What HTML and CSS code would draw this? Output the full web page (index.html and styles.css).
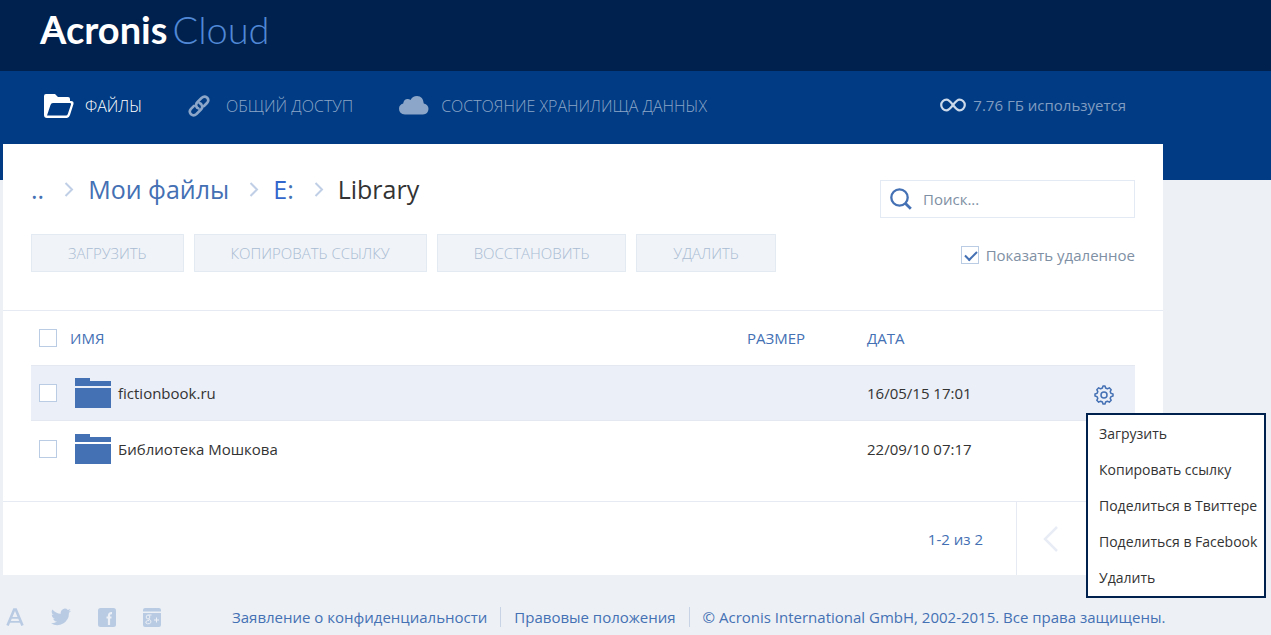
FILE: index.html
```html
<!DOCTYPE html>
<html lang="ru">
<head>
<meta charset="utf-8">
<title>Acronis Cloud</title>
<meta name="viewport" content="width=device-width, initial-scale=1">
<link rel="stylesheet" href="styles.css">
</head>
<body>
<header class="brand-bar">
  <a class="logo" href="#"><span class="logo-name">Acronis</span><span class="logo-product">Cloud</span></a>
</header>
<div class="nav-bar">
  <nav class="nav">
    <a class="nav-link nav-files active" href="#">
      <svg width="30" height="24" viewBox="0 0 30 24" aria-hidden="true"><path fill="currentColor" fill-rule="evenodd" d="M2 0h9l3 3h10q2 0 2 2v2h1q3 0 2.500 3l-3.500 11q-1 3-3 3H3q-3 0-3-3V2q0-2 2-2ZM9 9Q7 9 6.500 11L3 21.500H22q1.300 0 1.800-1.500L27 10.500Q27.500 9 26 9Z"/></svg>
      ФАЙЛЫ</a>
    <a class="nav-link nav-share" href="#">
      <svg width="22" height="22" viewBox="0 0 22 22" fill="none" stroke="currentColor" stroke-width="2.600" stroke-linecap="round" aria-hidden="true"><path d="M9 12.500q-2-3 .5-5.500l4-4q2.800-2.600 5.500-.5 2.600 2.800 0 5.500l-3 3M13 9q2.500 3 0 5.500l-4.500 4.500q-2.800 2.500-5.500.3-2.500-2.800 0-5.500l3-3"/><path d="m9 12.500 1.500 1M11.500 8l1.500 1"/></svg>
      ОБЩИЙ ДОСТУП</a>
    <a class="nav-link nav-storage" href="#">
      <svg width="30" height="19" viewBox="0 0 30 19" aria-hidden="true"><path fill="currentColor" d="M6 18.500Q0 18 0 12.800 0 8.800 4.200 7.600 4.500 3.800 8 3q2-.3 3.500.9Q13.500 0 18 0q6.300.4 6.800 7.500Q29.500 8.500 29.500 13q-.3 5-5.500 5.500Z"/></svg>
      СОСТОЯНИЕ ХРАНИЛИЩА ДАННЫХ</a>
  </nav>
  <div class="usage">
    <svg width="26" height="14" viewBox="0 0 26 14" fill="none" stroke="#ccd9ea" stroke-width="2.200" aria-hidden="true"><path d="M13 7Q9 1.700 6.500 1.700a5.200 5.200 0 0 0 0 10.600Q9 12.300 13 7T19.500 1.700a5.200 5.200 0 0 1 0 10.600Q17 12.300 13 7Z"/></svg>
    <span>7.76 ГБ используется</span>
  </div>
</div>
<main class="card">
  <div class="top-row">
    <nav class="crumbs" aria-label="Путь">
      <a class="crumb crumb-up" href="#">..</a>
      <svg class="chevron" width="10" height="15" viewBox="0 0 10 15" aria-hidden="true"><path d="m1.500 1 6.500 6.500L1.500 14"/></svg>
      <a class="crumb" href="#">Мои файлы</a>
      <svg class="chevron" width="10" height="15" viewBox="0 0 10 15" aria-hidden="true"><path d="m1.500 1 6.500 6.500L1.500 14"/></svg>
      <a class="crumb crumb-drive" href="#"><span>E</span>:</a>
      <svg class="chevron" width="10" height="15" viewBox="0 0 10 15" aria-hidden="true"><path d="m1.500 1 6.500 6.500L1.500 14"/></svg>
      <span class="crumb-current">Library</span>
    </nav>
    <label class="search">
      <svg width="22" height="22" viewBox="0 0 22 22" fill="none" stroke="#4470b4" aria-label="Поиск"><circle cx="9.500" cy="9.500" r="8.200" stroke-width="2.300"/><path d="m15.500 15.500 5.300 5.300" stroke-width="2.800"/></svg>
      <input class="search-input" type="text" placeholder="Поиск...">
    </label>
  </div>
  <div class="tool-row">
    <div class="buttons">
      <button class="btn" type="button" disabled>ЗАГРУЗИТЬ</button>
      <button class="btn" type="button" disabled>КОПИРОВАТЬ ССЫЛКУ</button>
      <button class="btn" type="button" disabled>ВОССТАНОВИТЬ</button>
      <button class="btn" type="button" disabled>УДАЛИТЬ</button>
    </div>
    <label class="show-deleted"><input class="check" type="checkbox" checked>Показать удаленное</label>
  </div>
  <div class="list">
    <table class="files">
      <thead>
        <tr>
          <th class="col-check"><input class="check" type="checkbox" aria-label="Выбрать все"></th>
          <th>ИМЯ</th>
          <th class="col-size">РАЗМЕР</th>
          <th class="col-date">ДАТА</th>
          <th class="col-action"></th>
        </tr>
      </thead>
      <tbody>
        <tr class="selected">
          <td class="col-check"><input class="check" type="checkbox" aria-label="fictionbook.ru"></td>
          <td><div class="name">
            <svg width="36" height="30" viewBox="0 0 36 30" fill="#4470b4" aria-hidden="true"><path d="M0 0h15v3h21v5H0ZM0 10h36v20H0Z"/></svg>
            fictionbook.ru</div></td>
          <td></td>
          <td>16/05/15 17:01</td>
          <td class="col-action">
            <div class="actions">
              <button class="gear" type="button" aria-label="Действия">
                <svg width="20" height="20" viewBox="0 0 20 20" fill="none" stroke="#4470b4" stroke-width="1.500" stroke-linejoin="round" aria-hidden="true"><path d="M8.400 3 9 1h2l.6 2 1.800.8 1.900-1 1.900 1.900-1 1.900.8 1.800 2 .6v2l-2 .6-.8 1.800 1 1.900-1.900 1.900-1.900-1-1.800.8-.6 2H9l-.6-2-1.800-.8-1.900 1-1.900-1.900 1-1.900L3 11.600 1 11V9l2-.6.8-1.800-1-1.900 1.900-1.900 1.900 1Z"/><circle cx="10" cy="10" r="3"/></svg>
              </button>
              <div class="menu" role="menu">
                <button class="menu-item" type="button" role="menuitem">Загрузить</button>
                <button class="menu-item" type="button" role="menuitem">Копировать ссылку</button>
                <button class="menu-item" type="button" role="menuitem">Поделиться в Твиттере</button>
                <button class="menu-item" type="button" role="menuitem">Поделиться в Facebook</button>
                <button class="menu-item" type="button" role="menuitem">Удалить</button>
              </div>
            </div>
          </td>
        </tr>
        <tr>
          <td class="col-check"><input class="check" type="checkbox" aria-label="Библиотека Мошкова"></td>
          <td><div class="name">
            <svg width="36" height="30" viewBox="0 0 36 30" fill="#4470b4" aria-hidden="true"><path d="M0 0h15v3h21v5H0ZM0 10h36v20H0Z"/></svg>
            Библиотека Мошкова</div></td>
          <td></td>
          <td>22/09/10 07:17</td>
          <td></td>
        </tr>
      </tbody>
    </table>
  </div>
  <div class="pager">
    <span class="pager-count">1-2 из 2</span>
    <button class="pager-prev" type="button" disabled aria-label="Назад">
      <svg width="15" height="26" viewBox="0 0 15 26" fill="none" stroke="#e8edf5" stroke-width="2.500" aria-hidden="true"><path d="M14 1 2 13l12 12"/></svg>
    </button>
  </div>
</main>
<footer class="footer">
  <div class="social">
    <a href="#" aria-label="Acronis"><svg width="18" height="18" viewBox="0 0 18 18" fill="none" stroke="#b9cbe3"><path stroke-width="2.600" d="M1.500 17.500 8.200 1.500h1.600l6.700 16"/><path stroke-width="1.800" d="M5.500 9.800h7M2.500 13.800h12"/></svg></a>
    <a href="#" aria-label="Twitter"><svg width="20" height="18" viewBox="0 0 24 20" fill="#b9cbe3"><path d="M24 2.400a10 10 0 0 1-2.800.8A5 5 0 0 0 23.300.5a10 10 0 0 1-3.100 1.200 4.900 4.900 0 0 0-8.400 4.500A14 14 0 0 1 1.700 1a4.900 4.900 0 0 0 1.500 6.600A5 5 0 0 1 1 7a4.900 4.900 0 0 0 3.900 4.900 5 5 0 0 1-2.200.1 4.900 4.900 0 0 0 4.600 3.400A10 10 0 0 1 0 17.500 14 14 0 0 0 21.500 5 10 10 0 0 0 24 2.400Z"/></svg></a>
    <a href="#" aria-label="Facebook"><svg width="18" height="19" viewBox="0 0 18 19"><rect width="18" height="19" rx="2.500" fill="#b9cbe3"/><path d="M11 17V7.500q0-2.500 3-2.300M8.500 9.500h5" fill="none" stroke="#edf0f6" stroke-width="2.200"/></svg></a>
    <a href="#" aria-label="Google+"><svg width="18" height="19" viewBox="0 0 18 19"><path fill="#b9cbe3" d="M2 0h14q2 0 2 2v1.500H0V2q0-2 2-2ZM0 5h18v12q0 2-2 2H2q-2 0-2-2Z"/><g fill="none" stroke="#edf0f6"><path d="M8.500 7H5.500M11 12h5M13.500 9.500v5"/><ellipse cx="5" cy="9" rx="1.800" ry="2"/><path d="M5.500 11q3 1.200 2.500 3.300-.8 1.800-3.500 1.500-2.500-.6-1.500-2.300 1-1.100 3-1"/></g></svg></a>
  </div>
  <div class="legal">
    <a class="legal-item" href="#">Заявление о конфиденциальности</a>
    <a class="legal-item" href="#">Правовые положения</a>
    <span class="legal-item">© Acronis International GmbH, 2002-2015. Все права защищены.</span>
  </div>
</footer>
</body>
</html>
```
FILE: styles.css
```css
* { box-sizing: border-box; }
body {
  margin: 0;
  background: #edf0f5;
  color: #333;
  font: 15px/20px "Open Sans", "Noto Sans", sans-serif;
}
a { color: #4470b4; text-decoration: none; }
button, input { font: inherit; }
svg { display: block; flex: none; }

.brand-bar {
  display: flex;
  height: 71px;
  padding: 5px 40px;
  background: #00214d;
}
.logo {
  display: flex;
  align-items: baseline;
  gap: 5px;
  font: 38px/48px Lato, sans-serif;
}
.logo-name { position: relative; color: #fff; font-weight: 700; }
.logo-name::after {
  content: "";
  position: absolute;
  top: 24px;
  left: 9px;
  width: 10px;
  height: 2px;
  background: #fff;
}
.logo-product { color: #5088d6; font-weight: 300; }

.nav-bar {
  display: flex;
  justify-content: space-between;
  height: 109px;
  padding: 0 145px 0 44px;
  background: #003b83;
  font-size: 16px;
}
.nav { display: flex; gap: 46px; height: 69px; align-items: center; }
.nav-link { display: flex; align-items: center; color: #8ba6c8; font-weight: 300; }
.nav-link.active { color: #fff; }
.nav-files { gap: 11px; }
.nav-share { gap: 16px; }
.nav-storage { gap: 12px; }
.usage { display: flex; align-items: center; gap: 7px; height: 67px; color: #809dc1; font-size: 15px; }

.card {
  margin: -36px 108px 0 3px;
  background: #fff;
}
.top-row, .tool-row {
  display: flex;
  justify-content: space-between;
  padding: 0 28px;
}
.top-row { padding-top: 36px; height: 90px; }
.crumbs { display: flex; height: 18px; align-items: center; font-size: 25px; }
.chevron { fill: none; stroke: #c0cfe6; stroke-width: 2; margin: 0 14px 0 20px; }
.crumb-drive span { color: #3366cc; }
.crumb-current { color: #333; }
.search {
  display: flex;
  align-items: center;
  gap: 11px;
  width: 255px;
  height: 38px;
  padding: 0 9px;
  border: 1px solid #e3eaf4;
}
.search-input {
  flex: 1;
  min-width: 0;
  padding: 0;
  border: 0;
  outline: 0;
  background: none;
  color: #333;
}
.search-input::placeholder { color: #8090a4; opacity: 1; }
.tool-row { height: 76px; }
.buttons { display: flex; gap: 10px; height: 38px; }
.btn {
  padding: 0 36px;
  border: 1px solid #e3eaf2;
  background: #f0f3f8;
  color: #a9bcd3;
  font-weight: 300;
}
.show-deleted { display: flex; gap: 7px; height: 42px; align-items: center; color: #8090a4; }
.check {
  appearance: none;
  display: block;
  width: 18px;
  height: 18px;
  margin: 0;
  border: 1px solid #b9cce4;
  background: #fff;
}
.check:checked::before {
  content: "";
  display: block;
  width: 10px;
  height: 5px;
  margin: 4px 3px;
  border: solid #4470b4;
  border-width: 0 0 2px 2px;
  transform: rotate(-45deg);
}

.list { padding: 0 28px 24px; border-top: 1px solid #e6eaf2; }
.files { width: 100%; table-layout: fixed; border-collapse: collapse; }
.files th { height: 54px; padding: 0; color: #4470b4; font-weight: 400; text-align: left; }
.files td { height: 56px; padding: 0; }
.files .col-check { width: 39px; padding-left: 8px; }
.col-size { width: 120px; }
.col-date { width: 227px; }
.col-action { width: 41px; }
.selected { background: #ebeff7; box-shadow: inset 0 1px #e4e9f1, inset 0 -1px #e4e9f1; }
.name { display: flex; align-items: center; gap: 7px; padding-left: 5px; }
.actions { position: relative; width: 20px; padding-top: 4px; }
.gear { display: block; padding: 0; border: 0; background: none; cursor: pointer; }
.menu {
  position: absolute;
  top: 32px;
  left: -8px;
  display: flex;
  flex-direction: column;
  width: 180px;
  padding: 1px 0 0;
  border: 2px solid #00214d;
  background: #fff;
}
.menu-item {
  height: 36px;
  padding: 0 11px;
  border: 0;
  background: none;
  color: #333;
  font-size: 14px;
  text-align: left;
  white-space: nowrap;
}

.pager {
  display: flex;
  justify-content: flex-end;
  align-items: center;
  height: 74px;
  border-top: 1px solid #e6eaf2;
  color: #4470b4;
}
.pager-count { padding-right: 33px; }
.pager-prev {
  align-self: stretch;
  width: 147px;
  padding: 0 26px;
  border: 0;
  border-left: 1px solid #e6eaf2;
  background: none;
}

.footer { display: flex; gap: 71px; padding: 32px 108px 6px 6px; align-items: center; }
.social { display: flex; gap: 27px; align-items: center; }
.legal { display: flex; color: #4470b4; white-space: nowrap; }
.legal-item + .legal-item { margin-left: 13px; padding-left: 13px; border-left: 1px solid #c8d4e6; }
```
